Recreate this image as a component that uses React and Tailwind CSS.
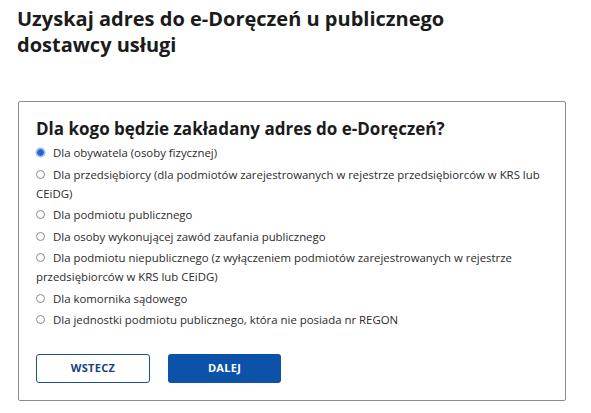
import React, { useState } from "react";

const options = [
  "Dla obywatela (osoby fizycznej)",
  "Dla przedsiębiorcy (dla podmiotów zarejestrowanych w rejestrze przedsiębiorców w KRS lub CEiDG)",
  "Dla podmiotu publicznego",
  "Dla osoby wykonującej zawód zaufania publicznego",
  "Dla podmiotu niepublicznego (z wyłączeniem podmiotów zarejestrowanych w rejestrze przedsiębiorców w KRS lub CEiDG)",
  "Dla komornika sądowego",
  "Dla jednostki podmiotu publicznego, która nie posiada nr REGON",
];

function Radio({ checked }) {
  return (
    <span
      className={
        "inline-block align-middle relative -top-[1px] w-[9px] h-[9px] rounded-full mr-[8px] " +
        (checked
          ? "bg-[#1f66d1] border-[1.5px] border-[#cfd9ea] shadow-[0_0_0_0.5px_#9fb4d6]"
          : "bg-white border border-[#8a8a8a]")
      }
    />
  );
}

export default function App() {
  const [selected, setSelected] = useState(0);

  return (
    <div className="w-[591px] h-[413px] bg-white text-[#1b1b1b] font-['Open_Sans',sans-serif] pl-[17px] pt-[6px]">
      <h1 className="text-[20px] leading-[26px] font-bold text-[#1b1b1b]">
        Uzyskaj adres do e-Doręczeń u publicznego
        <br />
        dostawcy usługi
      </h1>

      <div className="mt-[43px] ml-[1px] w-[548px] h-[300px] border-[1.5px] border-[#8c8c8c] rounded-[2px] pl-[17px] pr-[20px] pt-[15px]">
        <h2 className="text-[17px] leading-[24px] font-bold">
          Dla kogo będzie zakładany adres do e-Doręczeń?
        </h2>

        <div className="flex flex-col gap-[2.5px] mt-[2px]">
          {options.map((label, i) => (
            <label
              key={i}
              className="text-[11.4px] leading-[19px] text-[#2b2b2b] cursor-pointer"
              onClick={() => setSelected(i)}
            >
              <Radio checked={selected === i} />
              {label}
            </label>
          ))}
        </div>

        <div className="flex gap-[18px] mt-[25px]">
          <button className="w-[114px] h-[29px] rounded-[3px] border-[1.5px] border-[#1e4f92] bg-white text-[#17407f] text-[11px] font-bold tracking-[0.3px]">
            WSTECZ
          </button>
          <button className="w-[113px] h-[29px] rounded-[3px] bg-[#0b52a8] text-white text-[11px] font-bold tracking-[0.3px]">
            DALEJ
          </button>
        </div>
      </div>
    </div>
  );
}
